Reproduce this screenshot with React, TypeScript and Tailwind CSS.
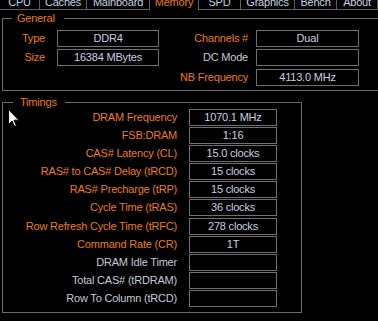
import React from "react";

const tabs = [
  { label: "CPU", cls: "w-[40px] border-r border-b" },
  { label: "Caches", cls: "w-[47px] border-r border-b" },
  { label: "Mainboard", cls: "w-[62px] border-b" },
  { label: "Memory", cls: "w-[50px] border-l border-r", sel: true },
  { label: "SPD", cls: "w-[42px] border-r border-b" },
  { label: "Graphics", cls: "w-[54px] border-r border-b" },
  { label: "Bench", cls: "w-[42px] border-r border-b" },
  { label: "About", cls: "w-[41px] border-r border-b" },
];

const timings: { label: string; value: string; orange: boolean; extra?: boolean }[] = [
  { label: "DRAM Frequency", value: "1070.1 MHz", orange: true },
  { label: "FSB:DRAM", value: "1:16", orange: true },
  { label: "CAS# Latency (CL)", value: "15.0 clocks", orange: true },
  { label: "RAS# to CAS# Delay (tRCD)", value: "15 clocks", orange: true },
  { label: "RAS# Precharge (tRP)", value: "15 clocks", orange: true },
  { label: "Cycle Time (tRAS)", value: "36 clocks", orange: true },
  { label: "Row Refresh Cycle Time (tRFC)", value: "278 clocks", orange: true, extra: true },
  { label: "Command Rate (CR)", value: "1T", orange: true },
  { label: "DRAM Idle Timer", value: "", orange: false },
  { label: "Total CAS# (tRDRAM)", value: "", orange: false },
  { label: "Row To Column (tRCD)", value: "", orange: false },
];

function Box({ w, children }: { w: string; children?: React.ReactNode }) {
  return (
    <div
      className={`${w} h-[17px] shrink-0 border border-[#707070] flex items-center justify-center text-[#c6d0e0] whitespace-nowrap`}
    >
      {children}
    </div>
  );
}

export default function App() {
  return (
    <div className="relative w-[378px] h-[321px] overflow-hidden bg-black font-['Liberation_Sans',Arial,sans-serif] text-[11px] leading-none tracking-[-0.2px]">
      {/* tab strip */}
      <div className="flex mt-[-9px] h-[19px]">
        {tabs.map((t) => (
          <div
            key={t.label}
            className={`${t.cls} h-[19px] shrink-0 border-[#5e5e5e] flex items-center justify-center pt-[4px] whitespace-nowrap ${
              t.sel ? "text-[#ec7a1f]" : "text-[#c6d0e0]"
            }`}
          >
            {t.label}
          </div>
        ))}
      </div>

      {/* General */}
      <div className="relative ml-[2px] mt-[8px] w-[400px] h-[73px] border-t border-l border-b border-[#6a6a6a] pt-[11px]">
        <div className="absolute left-[9px] top-[-8px] h-[14px] flex items-center bg-black pl-[5px] pr-[9px] text-[#ec7a1f]">
          General
        </div>
        <div className="flex items-center h-[17px]">
          <div className="w-[42px] text-right text-[#ec7a1f]">Type</div>
          <div className="w-[12px]" />
          <Box w="w-[102px]">DDR4</Box>
          <div className="w-[89px] text-right text-[#ec7a1f]">Channels #</div>
          <div className="w-[8px]" />
          <Box w="w-[103px]">Dual</Box>
        </div>
        <div className="flex items-center h-[17px] mt-[2px]">
          <div className="w-[42px] text-right text-[#ec7a1f]">Size</div>
          <div className="w-[12px]" />
          <Box w="w-[102px]">16384 MBytes</Box>
          <div className="w-[89px] text-right text-[#c0cad8]">DC Mode</div>
          <div className="w-[8px]" />
          <Box w="w-[103px]" />
        </div>
        <div className="flex items-center h-[17px] mt-[3px] ml-[156px]">
          <div className="w-[89px] text-right text-[#ec7a1f] whitespace-nowrap">NB Frequency</div>
          <div className="w-[8px]" />
          <Box w="w-[103px]">4113.0 MHz</Box>
        </div>
      </div>

      {/* Timings */}
      <div className="relative ml-[2px] mt-[11px] w-[300px] h-[211px] border border-[#6a6a6a] pt-[6px]">
        <div className="absolute left-[10px] top-[-8px] h-[14px] flex items-center bg-black pl-[7px] pr-[8px] text-[#ec7a1f]">
          Timings
        </div>
        <div className="flex flex-col gap-[1px]">
          {timings.map((r) => (
            <div
              key={r.label}
              className={`flex items-center h-[17px] ${r.extra ? "mt-[1px]" : ""}`}
            >
              <div
                className={`w-[174px] text-right whitespace-nowrap ${
                  r.orange ? "text-[#ec7a1f]" : "text-[#c0cad8]"
                }`}
              >
                {r.label}
              </div>
              <div className="w-[12px]" />
              <Box w="w-[88px]">{r.value}</Box>
            </div>
          ))}
        </div>
      </div>

      {/* mouse cursor */}
      <svg
        className="absolute left-[8px] top-[109px]"
        width="12"
        height="19"
        viewBox="0 0 12 19"
      >
        <path
          d="M0.5 0.5 L0.5 15.5 L4 12 L6.5 17.5 L8.5 16.6 L6 11.2 L10.8 11.2 Z"
          fill="#ffffff"
          stroke="#000000"
          strokeWidth="1"
        />
      </svg>
    </div>
  );
}
